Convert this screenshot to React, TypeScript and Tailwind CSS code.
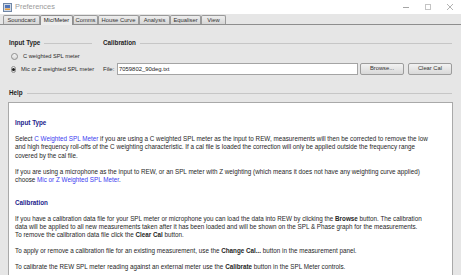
import React from 'react';

const tabs = [
    { label: 'Soundcard', w: 'w-[37px]' },
    { label: 'Mic/Meter', w: 'w-[33px]', active: true },
    { label: 'Comms', w: 'w-[25px]' },
    { label: 'House Curve', w: 'w-[41px]' },
    { label: 'Analysis', w: 'w-[31px]' },
    { label: 'Equaliser', w: 'w-[31px]' },
    { label: 'View', w: 'w-[25px]' },
];

const SectionTitle: React.FC<{ title: string }> = ({ title }) => (
    <div className="flex items-center h-[8px] gap-[4px]">
        <span className="font-bold text-[6.3px] leading-[8px] text-[#1e1e1e] whitespace-nowrap">{title}</span>
        <div className="flex-1 h-px bg-[#c6c6c6]" />
    </div>
);

const Radio: React.FC<{ label: string; checked?: boolean }> = ({ label, checked }) => (
    <div className="flex items-center h-[13px] pl-[2px] gap-[5px]">
        <div className="w-[7px] h-[7px] rounded-full border border-[#8f8f8f] bg-gradient-to-b from-[#f4f4f4] to-[#d8d8d8] flex items-center justify-center">
            {checked && <div className="w-[3px] h-[3px] rounded-full bg-[#1a1a1a]" />}
        </div>
        <span className="text-[5.7px] text-[#2a2a2a] whitespace-nowrap">{label}</span>
    </div>
);

const Btn: React.FC<{ label: string }> = ({ label }) => (
    <button className="w-[44px] h-[12px] rounded-[2px] border border-[#9c9c9c] bg-gradient-to-b from-[#f2f2f2] to-[#d9d9d9] text-[5.8px] text-[#333] leading-none">
        {label}
    </button>
);

const Link: React.FC<{ children: React.ReactNode }> = ({ children }) => (
    <span className="text-[#3b3bef]">{children}</span>
);

export default function App() {
    return (
        <div className="w-[461px] h-[275px] overflow-hidden bg-[#e6e6e6] flex flex-col font-['Liberation_Sans',Arial,sans-serif]">
            {/* title bar */}
            <div className="h-[14px] bg-white flex items-center pl-[3px] pr-[8px] shrink-0">
                <svg width="9" height="9" viewBox="0 0 9 9">
                    <rect x="0.5" y="0.5" width="8" height="8" fill="#cfd9e6" stroke="#6f86a6" />
                    <rect x="2" y="2" width="5" height="3" fill="#4f74b8" />
                    <rect x="2" y="5.5" width="5" height="1.5" fill="#e39a3b" />
                </svg>
                <span className="ml-[3px] text-[7.4px] text-[#9a9a9a]">Preferences</span>
                <div className="ml-auto flex items-center gap-[16px]">
                    <div className="w-[6px] h-px bg-[#a5a5a5]" />
                    <div className="w-[6px] h-[6px] border border-[#c4c4c4]" />
                    <svg width="6" height="6" viewBox="0 0 6 6" stroke="#a0a0a0" strokeWidth="0.8">
                        <path d="M0 0L6 6M6 0L0 6" />
                    </svg>
                </div>
            </div>

            {/* tabs */}
            <div className="h-[11px] flex items-end pl-[3px] border-b border-[#8e8e8e] shrink-0">
                {tabs.map((t) => (
                    <div
                        key={t.label}
                        className={
                            t.active
                                ? `${t.w} h-[10px] -mb-px bg-[#ececec] border border-b-0 border-[#8e8e8e] rounded-t-[2px] flex items-center justify-center text-[5.8px] text-[#222]`
                                : `${t.w} h-[9px] bg-gradient-to-b from-[#eeeeee] to-[#d6d6d6] border border-b-0 border-[#9a9a9a] rounded-t-[2px] flex items-center justify-center text-[5.8px] text-[#333]`
                        }
                    >
                        {t.label}
                    </div>
                ))}
            </div>

            {/* body */}
            <div className="flex-1 flex flex-col px-[9px] pt-[14px]">
                <div className="flex">
                    <div className="w-[94px] pr-[11px]">
                        <SectionTitle title="Input Type" />
                        <div className="mt-[2.5px]">
                            <Radio label="C weighted SPL meter" />
                            <Radio label="Mic or Z weighted SPL meter" checked />
                        </div>
                    </div>
                    <div className="flex-1">
                        <SectionTitle title="Calibration" />
                        <div className="mt-[15.5px] h-[13px] flex items-center">
                            <span className="text-[6px] text-[#2a2a2a] w-[14px]">File:</span>
                            <div className="w-[241px] h-[12px] bg-white border border-[#a4a4a4] flex items-center pl-[1px] text-[5.9px] text-[#222]">
                                7059802_90deg.txt
                            </div>
                            <div className="ml-[2px] flex gap-[4px]">
                                <Btn label="Browse..." />
                                <Btn label="Clear Cal" />
                            </div>
                        </div>
                    </div>
                </div>

                <div className="mt-[13.5px]">
                    <SectionTitle title="Help" />
                </div>

                <div className="mt-[5px] -mx-[1px] h-[200px] bg-white border border-[#a9a9a9] pl-[6px] pt-[16px] text-[6.3px] leading-[8.3px] text-[#262626] whitespace-nowrap">
                    <div className="font-bold text-[#23238c]">Input Type</div>
                    <p className="mt-[7.7px]">
                        Select <Link>C Weighted SPL Meter</Link> if you are using a C weighted SPL meter as the input to REW, measurements will then be corrected to remove the low
                        <br />
                        and high frequency roll-offs of the C weighting characteristic. If a cal file is loaded the correction will only be applied outside the frequency range
                        <br />
                        covered by the cal file.
                    </p>
                    <p className="mt-[7.7px]">
                        If you are using a microphone as the input to REW, or an SPL meter with Z weighting (which means it does not have any weighting curve applied)
                        <br />
                        choose <Link>Mic or Z Weighted SPL Meter</Link>.
                    </p>
                    <div className="mt-[14.7px] font-bold text-[#23238c]">Calibration</div>
                    <p className="mt-[7.7px]">
                        If you have a calibration data file for your SPL meter or microphone you can load the data into REW by clicking the <b>Browse</b> button. The calibration
                        <br />
                        data will be applied to all new measurements taken after it has been loaded and will be shown on the SPL &amp; Phase graph for the measurements.
                        <br />
                        To remove the calibration data file click the <b>Clear Cal</b> button.
                    </p>
                    <p className="mt-[7.7px]">
                        To apply or remove a calibration file for an existing measurement, use the <b>Change Cal...</b> button in the measurement panel.
                    </p>
                    <p className="mt-[7.7px]">
                        To calibrate the REW SPL meter reading against an external meter use the <b>Calibrate</b> button in the SPL Meter controls.
                    </p>
                </div>
            </div>
        </div>
    );
}
